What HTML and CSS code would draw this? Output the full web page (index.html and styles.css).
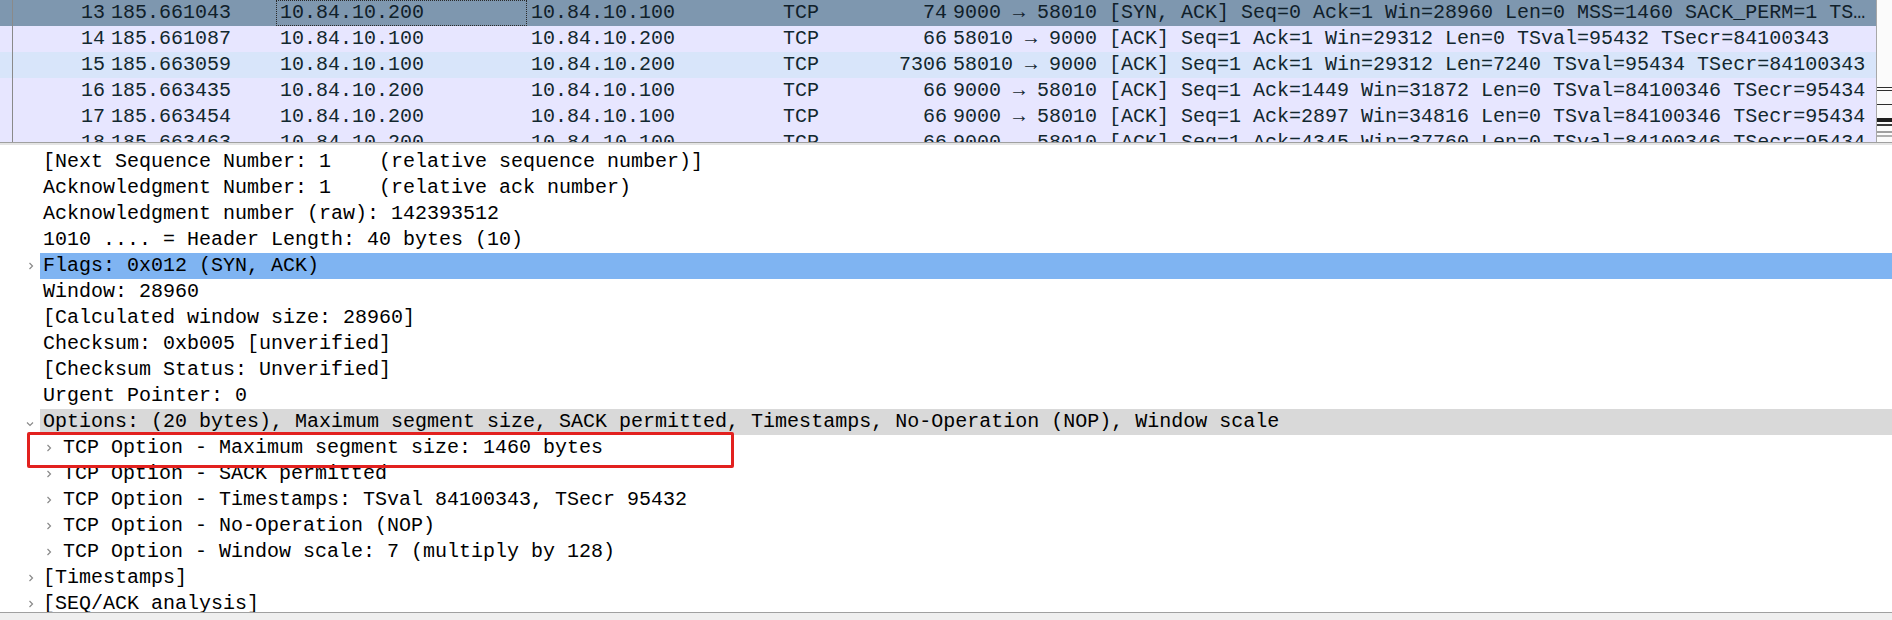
FILE: index.html
```html
<!DOCTYPE html>
<html>
<head>
<meta charset="utf-8">
<link rel="stylesheet" href="styles.css">
</head>
<body>
<div class="app">
  <div class="plist">
    <div class="prows">
      <div class="prow sel"><span class="c gut"></span><span class="c no">13</span><span class="c time">185.661043</span><span class="c src focus">10.84.10.200</span><span class="c dst">10.84.10.100</span><span class="c proto">TCP</span><span class="c len">74</span><span class="c info">9000 → 58010 [SYN, ACK] Seq=0 Ack=1 Win=28960 Len=0 MSS=1460 SACK_PERM=1 TS…</span></div>
      <div class="prow"><span class="c gut"></span><span class="c no">14</span><span class="c time">185.661087</span><span class="c src">10.84.10.100</span><span class="c dst">10.84.10.200</span><span class="c proto">TCP</span><span class="c len">66</span><span class="c info">58010 → 9000 [ACK] Seq=1 Ack=1 Win=29312 Len=0 TSval=95432 TSecr=84100343</span></div>
      <div class="prow hover"><span class="c gut"></span><span class="c no">15</span><span class="c time">185.663059</span><span class="c src">10.84.10.100</span><span class="c dst">10.84.10.200</span><span class="c proto">TCP</span><span class="c len">7306</span><span class="c info">58010 → 9000 [ACK] Seq=1 Ack=1 Win=29312 Len=7240 TSval=95434 TSecr=84100343</span></div>
      <div class="prow"><span class="c gut"></span><span class="c no">16</span><span class="c time">185.663435</span><span class="c src">10.84.10.200</span><span class="c dst">10.84.10.100</span><span class="c proto">TCP</span><span class="c len">66</span><span class="c info">9000 → 58010 [ACK] Seq=1 Ack=1449 Win=31872 Len=0 TSval=84100346 TSecr=95434</span></div>
      <div class="prow"><span class="c gut"></span><span class="c no">17</span><span class="c time">185.663454</span><span class="c src">10.84.10.200</span><span class="c dst">10.84.10.100</span><span class="c proto">TCP</span><span class="c len">66</span><span class="c info">9000 → 58010 [ACK] Seq=1 Ack=2897 Win=34816 Len=0 TSval=84100346 TSecr=95434</span></div>
      <div class="prow"><span class="c gut"></span><span class="c no">18</span><span class="c time">185.663463</span><span class="c src">10.84.10.200</span><span class="c dst">10.84.10.100</span><span class="c proto">TCP</span><span class="c len">66</span><span class="c info">9000 → 58010 [ACK] Seq=1 Ack=4345 Win=37760 Len=0 TSval=84100346 TSecr=95434</span></div>
    </div>
    <div class="minimap"></div>
  </div>
  <div class="splitter"></div>
  <div class="details">
    <div class="node l0"><span class="tw"></span><span class="lbl">[Next Sequence Number: 1    (relative sequence number)]</span></div>
    <div class="node l0"><span class="tw"></span><span class="lbl">Acknowledgment Number: 1    (relative ack number)</span></div>
    <div class="node l0"><span class="tw"></span><span class="lbl">Acknowledgment number (raw): 142393512</span></div>
    <div class="node l0"><span class="tw"></span><span class="lbl">1010 .... = Header Length: 40 bytes (10)</span></div>
    <div class="node l0 selected"><span class="tw"><svg class="chev" width="6" height="8" viewBox="0 0 6 8"><path d="M1.5 1 L4.5 4 L1.5 7" fill="none" stroke="#8a8a8a" stroke-width="1.2"/></svg></span><span class="lbl">Flags: 0x012 (SYN, ACK)</span></div>
    <div class="node l0"><span class="tw"></span><span class="lbl">Window: 28960</span></div>
    <div class="node l0"><span class="tw"></span><span class="lbl">[Calculated window size: 28960]</span></div>
    <div class="node l0"><span class="tw"></span><span class="lbl">Checksum: 0xb005 [unverified]</span></div>
    <div class="node l0"><span class="tw"></span><span class="lbl">[Checksum Status: Unverified]</span></div>
    <div class="node l0"><span class="tw"></span><span class="lbl">Urgent Pointer: 0</span></div>
    <div class="node l0 current"><span class="tw"><svg class="chev down" width="8" height="6" viewBox="0 0 8 6"><path d="M1 1.5 L4 4.5 L7 1.5" fill="none" stroke="#8a8a8a" stroke-width="1.2"/></svg></span><span class="lbl">Options: (20 bytes), Maximum segment size, SACK permitted, Timestamps, No-Operation (NOP), Window scale</span></div>
    <div class="node l1"><span class="tw"><svg class="chev" width="6" height="8" viewBox="0 0 6 8"><path d="M1.5 1 L4.5 4 L1.5 7" fill="none" stroke="#8a8a8a" stroke-width="1.2"/></svg></span><span class="lbl">TCP Option - Maximum segment size: 1460 bytes</span></div>
    <div class="node l1"><span class="tw"><svg class="chev" width="6" height="8" viewBox="0 0 6 8"><path d="M1.5 1 L4.5 4 L1.5 7" fill="none" stroke="#8a8a8a" stroke-width="1.2"/></svg></span><span class="lbl">TCP Option - SACK permitted</span></div>
    <div class="node l1"><span class="tw"><svg class="chev" width="6" height="8" viewBox="0 0 6 8"><path d="M1.5 1 L4.5 4 L1.5 7" fill="none" stroke="#8a8a8a" stroke-width="1.2"/></svg></span><span class="lbl">TCP Option - Timestamps: TSval 84100343, TSecr 95432</span></div>
    <div class="node l1"><span class="tw"><svg class="chev" width="6" height="8" viewBox="0 0 6 8"><path d="M1.5 1 L4.5 4 L1.5 7" fill="none" stroke="#8a8a8a" stroke-width="1.2"/></svg></span><span class="lbl">TCP Option - No-Operation (NOP)</span></div>
    <div class="node l1"><span class="tw"><svg class="chev" width="6" height="8" viewBox="0 0 6 8"><path d="M1.5 1 L4.5 4 L1.5 7" fill="none" stroke="#8a8a8a" stroke-width="1.2"/></svg></span><span class="lbl">TCP Option - Window scale: 7 (multiply by 128)</span></div>
    <div class="node l0"><span class="tw"><svg class="chev" width="6" height="8" viewBox="0 0 6 8"><path d="M1.5 1 L4.5 4 L1.5 7" fill="none" stroke="#8a8a8a" stroke-width="1.2"/></svg></span><span class="lbl">[Timestamps]</span></div>
    <div class="node l0"><span class="tw"><svg class="chev" width="6" height="8" viewBox="0 0 6 8"><path d="M1.5 1 L4.5 4 L1.5 7" fill="none" stroke="#8a8a8a" stroke-width="1.2"/></svg></span><span class="lbl">[SEQ/ACK analysis]</span></div>
    <div class="annot"></div>
  </div>
  <div class="status"></div>
</div>
</body>
</html>
```

FILE: styles.css
```css
html, body {
  margin: 0;
  padding: 0;
}
body {
  width: 1892px;
  height: 620px;
  overflow: hidden;
  background: #ffffff;
  font-family: "Liberation Mono", "DejaVu Sans Mono", monospace;
  font-size: 20px;
  color: #000000;
}
.app {
  display: flex;
  flex-direction: column;
  height: 620px;
}
.plist {
  flex: none;
  height: 142px;
  display: flex;
  overflow: hidden;
  border-bottom: 1px solid #a0a0a0;
}
.prows {
  width: 1876px;
  flex: none;
  overflow: hidden;
}
.prow {
  display: grid;
  grid-template-columns: 13px 94px 169px 251px 252px 90px 80px 927px;
  height: 26px;
  line-height: 26px;
  background: #e7e6ff;
  color: #12272e;
  white-space: pre;
}
.prow.sel {
  background: #7e97af;
  color: #10202a;
}
.prow.hover {
  background: #d8e5fa;
}
.c {
  overflow: hidden;
  box-sizing: border-box;
}
.gut {
  border-right: 1px solid #8a8a8a;
}
.no {
  text-align: right;
  padding-right: 2px;
}
.time, .src, .dst, .proto, .info {
  padding-left: 4px;
}
.len {
  text-align: right;
  padding-right: 2px;
}
.focus {
  outline: 1px dotted #2a2a2a;
  outline-offset: -1px;
}
.minimap {
  flex: 1;
  border-left: 1px solid #a8a8a8;
  background:
    linear-gradient(#2e2e2e, #2e2e2e) 0 87px / 100% 1px no-repeat,
    linear-gradient(#2e2e2e, #2e2e2e) 0 90px / 100% 1px no-repeat,
    linear-gradient(#2e2e2e, #2e2e2e) 0 104px / 100% 1px no-repeat,
    linear-gradient(#1e1e1e, #1e1e1e) 0 118px / 100% 4px no-repeat,
    linear-gradient(#3a3a3a, #3a3a3a) 0 124px / 100% 2px no-repeat,
    linear-gradient(#a0a0a0, #a0a0a0) 0 131px / 100% 2px no-repeat,
    linear-gradient(#b0b0b0, #b0b0b0) 0 135px / 100% 2px no-repeat,
    #fbfbfb;
}
.splitter {
  flex: none;
  height: 2px;
  background: #e4e4e4;
}
.details {
  position: relative;
  flex: none;
  height: 463px;
  padding-top: 4px;
  overflow: hidden;
  background: #ffffff;
}
.node {
  display: flex;
  height: 26px;
  line-height: 26px;
  white-space: pre;
}
.tw {
  flex: none;
  display: flex;
  align-items: center;
  box-sizing: border-box;
}
.l0 .tw {
  width: 40px;
  padding-left: 28px;
}
.l1 .tw {
  width: 60px;
  padding-left: 46px;
}
.chev.down {
  margin-left: -2px;
  margin-top: 3px;
}
.lbl {
  flex: 1;
  padding-left: 3px;
}
.selected .lbl {
  background: #7fb4f2;
}
.current .lbl {
  background: #d9d9d9;
}
.annot {
  position: absolute;
  left: 27px;
  top: 287px;
  width: 707px;
  height: 36px;
  box-sizing: border-box;
  border: 3px solid #e2211f;
  border-radius: 2px;
}
.status {
  flex: 1;
  border-top: 1px solid #a0a0a0;
  background: #efefef;
}
```
